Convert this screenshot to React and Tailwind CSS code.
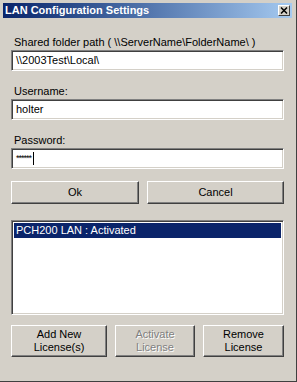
const font = { fontFamily: '"Liberation Sans", Arial, sans-serif' };

function Field({ children }) {
  return (
    <div className="h-[21px] bg-white border border-t-[#808080] border-l-[#808080] border-r-white border-b-white shadow-[inset_1px_1px_0_#404040,inset_-1px_-1px_0_#d4d0c8] flex items-center px-[4px] text-[11px] text-black">
      {children}
    </div>
  );
}

function Button({ children, className = '', disabled }) {
  return (
    <div
      className={
        'flex items-center justify-center text-center leading-[13px] text-[11px] border border-t-white border-l-white border-r-[#404040] border-b-[#404040] shadow-[inset_-1px_-1px_0_#808080] ' +
        (disabled ? 'text-[#808080] [text-shadow:1px_1px_0_#ffffff] ' : 'text-black ') +
        className
      }
    >
      {children}
    </div>
  );
}

export default function App() {
  return (
    <div
      className="w-[297px] h-[382px] bg-[#d4d0c8] flex flex-col pt-[3px] pl-[3px] pr-[4px] border-r border-b border-r-[#404040] border-b-[#404040]"
      style={font}
    >
      <div className="h-[15px] bg-gradient-to-r from-[#0a246a] to-[#a6caf0] flex items-center justify-between pl-[2px] pr-[2px]">
        <span className="text-white font-bold text-[11px] leading-none">LAN Configuration Settings</span>
        <div className="w-[12px] h-[11px] bg-[#d4d0c8] border border-t-white border-l-white border-r-[#404040] border-b-[#404040] flex items-center justify-center">
          <svg width="8" height="7" viewBox="0 0 8 7">
            <path d="M1 0.5 L7 6.5 M7 0.5 L1 6.5" stroke="#000" strokeWidth="1.5" />
          </svg>
        </div>
      </div>

      <div className="flex flex-col px-[8px] text-[11px] text-black">
        <div className="mt-[17px] h-[14px] leading-[14px] pl-[3px]">Shared folder path ( \\ServerName\FolderName\ )</div>
        <div className="mt-[1px]">
          <Field>\\2003Test\Local\</Field>
        </div>

        <div className="mt-[13px] h-[14px] leading-[14px] pl-[3px]">Username:</div>
        <div className="mt-[1px]">
          <Field>holter</Field>
        </div>

        <div className="mt-[13px] h-[14px] leading-[14px] pl-[3px]">Password:</div>
        <div className="mt-[1px]">
          <Field>
            <span className="text-[9px] tracking-[-1px]">******</span>
            <span className="w-px h-[13px] bg-black ml-[2px]" />
          </Field>
        </div>

        <div className="mt-[12px] flex gap-[8px]">
          <Button className="w-[128px] h-[23px]">Ok</Button>
          <Button className="flex-1 h-[23px]">Cancel</Button>
        </div>

        <div className="mt-[16px] h-[95px] bg-white border border-t-[#808080] border-l-[#808080] border-r-white border-b-white shadow-[inset_1px_1px_0_#404040,inset_-1px_-1px_0_#d4d0c8] p-[2px]">
          <div className="bg-[#0a246a] text-white h-[15px] leading-[15px] pl-[2px]">PCH200 LAN : Activated</div>
        </div>

        <div className="mt-[10px] flex gap-[8px]">
          <Button className="w-[96px] h-[32px]">Add New<br />License(s)</Button>
          <Button className="w-[80px] h-[32px]" disabled>Activate<br />License</Button>
          <Button className="flex-1 h-[32px]">Remove<br />License</Button>
        </div>
      </div>
    </div>
  );
}
